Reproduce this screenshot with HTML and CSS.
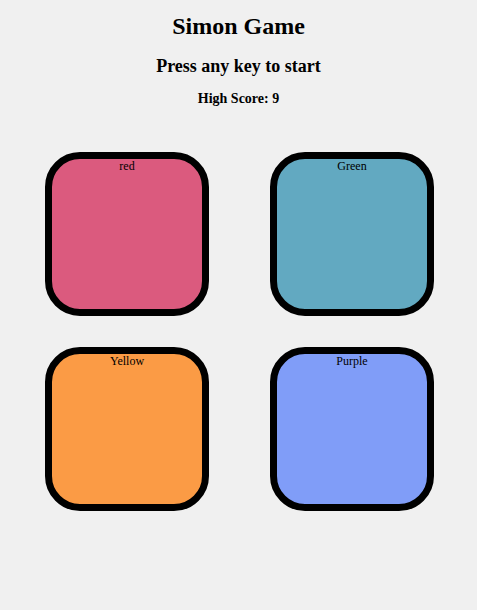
FILE: index.html
```html
<!DOCTYPE html>
<html>
<head>
<meta charset="utf-8">
<title>Simon Game</title>
<link rel="stylesheet" href="styles.css">
</head>
<body>
<h1 class="title">Simon Game</h1>
<h2 class="status">Press any key to start</h2>
<h3 class="score">High Score: 9</h3>
<div class="board">
  <div class="pad pad-red">red</div>
  <div class="pad pad-green">Green</div>
  <div class="pad pad-yellow">Yellow</div>
  <div class="pad pad-purple">Purple</div>
</div>
</body>
</html>
```
FILE: styles.css
```css
html, body {
  margin: 0;
  padding: 0;
  background: #f0f0f0;
}
body {
  font-family: "Liberation Serif", "Times New Roman", serif;
  color: #000;
  text-align: center;
  padding-top: 12px;
}
.title {
  font-size: 24px;
  margin: 0;
  line-height: 28px;
}
.status {
  font-size: 18px;
  margin: 15px 0 0;
  line-height: 22px;
}
.score {
  font-size: 14px;
  margin: 13px 0 0;
  line-height: 17px;
}
.board {
  display: grid;
  grid-template-columns: 164px 164px;
  column-gap: 61px;
  row-gap: 31px;
  justify-content: center;
  margin-top: 45px;
  padding-left: 2px;
}
.pad {
  height: 150px;
  border: 7px solid #000;
  border-radius: 35px;
  font-size: 12px;
  line-height: 14px;
}
.pad-red { background: #db5a7e; }
.pad-green { background: #62a9c1; }
.pad-yellow { background: #fb9b45; }
.pad-purple { background: #809df8; }
```
